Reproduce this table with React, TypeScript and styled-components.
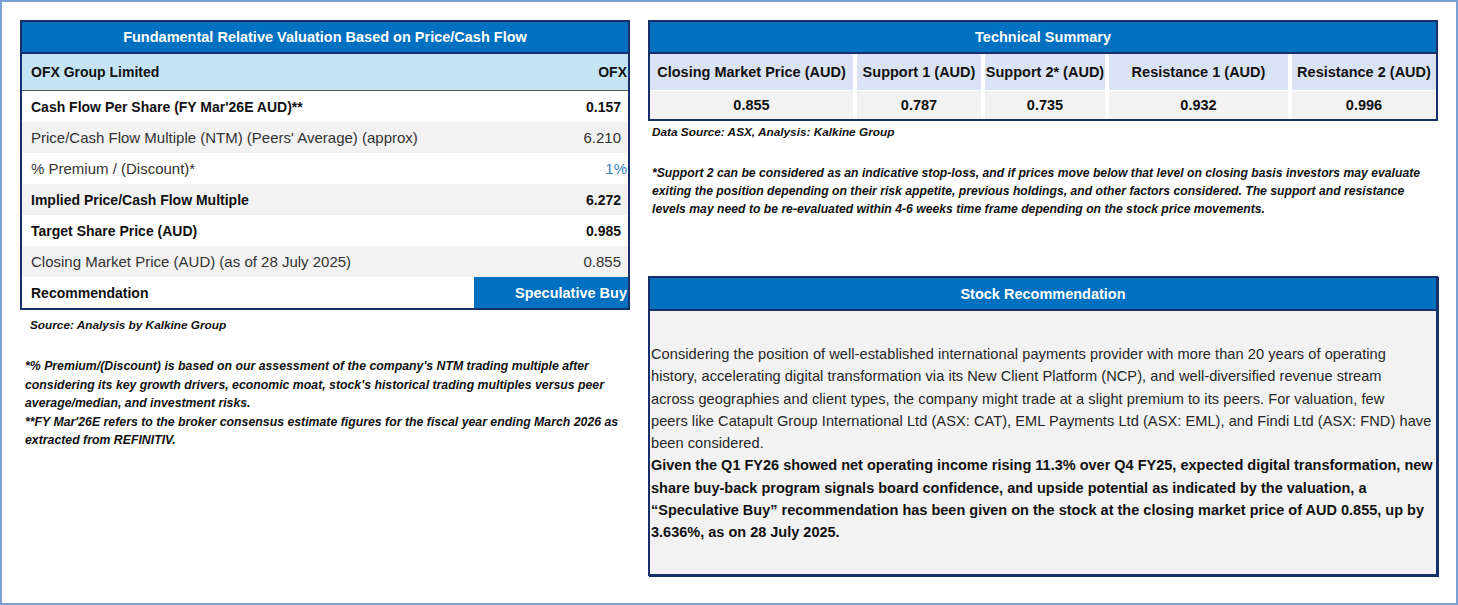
import React from "react";
import styled, { createGlobalStyle } from "styled-components";

const GlobalStyle = createGlobalStyle`
  html, body {
    margin: 0;
    padding: 0;
    background: #ffffff;
  }
  body {
    font-family: "Liberation Sans", Arial, sans-serif;
    color: #111;
  }
`;

const navy = "#17306b";
const blue = "#0070c0";

const Frame = styled.div`
  box-sizing: border-box;
  width: 1458px;
  height: 605px;
  border: 2px solid #7ba0d6;
  padding: 18px 18px 0 18px;
  display: grid;
  grid-template-columns: 610px 790px;
  column-gap: 18px;
  align-items: start;
`;

const Column = styled.div`
  display: flex;
  flex-direction: column;
`;

const Table = styled.div`
  box-sizing: border-box;
  border: 2px solid ${navy};
  display: flex;
  flex-direction: column;
`;

const TitleBar = styled.div<{ $h?: number }>`
  height: ${(p) => p.$h ?? 30}px;
  background: ${blue};
  border-bottom: 2px solid ${navy};
  color: #fff;
  font-weight: 700;
  font-size: 14.5px;
  display: flex;
  align-items: center;
  justify-content: center;
`;

const Row = styled.div<{ $bg?: string; $h?: number; $line?: boolean }>`
  height: ${(p) => p.$h ?? 31}px;
  background: ${(p) => p.$bg ?? "#fff"};
  border-bottom: ${(p) => (p.$line ? "1px solid #555" : "none")};
  display: flex;
  align-items: stretch;
  justify-content: space-between;
`;

const Label = styled.div<{ $bold?: boolean }>`
  display: flex;
  align-items: center;
  padding-left: 9px;
  font-size: ${(p) => (p.$bold ? 14 : 15)}px;
  font-weight: ${(p) => (p.$bold ? 700 : 400)};
  color: ${(p) => (p.$bold ? "#111" : "#333")};
`;

const Value = styled.div<{ $bold?: boolean; $color?: string; $pad?: number }>`
  display: flex;
  align-items: center;
  justify-content: flex-end;
  padding-right: ${(p) => p.$pad ?? 7}px;
  font-size: ${(p) => (p.$bold ? 14 : 15)}px;
  font-weight: ${(p) => (p.$bold ? 700 : 400)};
  color: ${(p) => p.$color ?? (p.$bold ? "#111" : "#333")};
`;

const RecoCell = styled.div`
  width: 153px;
  display: flex;
  align-items: center;
  justify-content: flex-end;
  padding-right: 1px;
  background: ${blue};
  color: #fff;
  font-weight: 700;
  font-size: 14.5px;
`;

const Source = styled.div<{ $indent?: number; $top?: number }>`
  margin-top: ${(p) => p.$top ?? 8}px;
  padding-left: ${(p) => p.$indent ?? 0}px;
  font-size: 11.8px;
  font-style: italic;
  font-weight: 700;
  line-height: 15px;
  color: #111;
`;

const Note = styled.p<{ $top: number; $indent: number; $size: number; $lh: number }>`
  margin: ${(p) => p.$top}px 0 0 0;
  padding-left: ${(p) => p.$indent}px;
  font-size: ${(p) => p.$size}px;
  font-style: italic;
  font-weight: 700;
  line-height: ${(p) => p.$lh}px;
  white-space: nowrap;
  color: #111;
`;

const TechGrid = styled.div`
  display: grid;
  grid-template-columns: 203px 128px 124px 183px 148px;
`;

const HeadCell = styled.div<{ $first?: boolean }>`
  height: 36px;
  background: #dae3f3;
  border-left: ${(p) => (p.$first ? "none" : "4px solid #fff")};
  border-bottom: 1px solid #fff;
  display: flex;
  align-items: center;
  justify-content: center;
  font-weight: 700;
  font-size: 14.5px;
  white-space: nowrap;
`;

const ValCell = styled.div<{ $first?: boolean }>`
  height: 28px;
  background: #f2f2f2;
  border-left: ${(p) => (p.$first ? "none" : "4px solid #fff")};
  display: flex;
  align-items: center;
  justify-content: center;
  font-weight: 700;
  font-size: 14.5px;
`;

const RecoBox = styled.div`
  box-sizing: border-box;
  margin-top: 58px;
  height: 300px;
  border: 2px solid ${navy};
  box-shadow: 1px 1px 0 ${navy};
  display: flex;
  flex-direction: column;
`;

const RecoBody = styled.div`
  flex: 1;
  background: #f2f2f2;
  padding: 32px 0 0 1px;
  font-size: 14.6px;
  letter-spacing: 0.05px;
  line-height: 22.3px;
  white-space: nowrap;
  color: #262626;
`;

const Strong = styled.span`
  font-size: 14.5px;
  letter-spacing: 0;
  font-weight: 700;
  color: #111;
`;

type LeftRow = {
  label: string;
  value: string;
  bold?: boolean;
  bg: string;
  color?: string;
  pad?: number;
};

const leftRows: LeftRow[] = [
  { label: "Cash Flow Per Share (FY Mar'26E AUD)**", value: "0.157", bold: true, bg: "#fff" },
  { label: "Price/Cash Flow Multiple (NTM) (Peers' Average) (approx)", value: "6.210", bg: "#f2f2f2" },
  { label: "% Premium / (Discount)*", value: "1%", bg: "#fff", color: "#3a86b8", pad: 1 },
  { label: "Implied Price/Cash Flow Multiple", value: "6.272", bold: true, bg: "#f2f2f2" },
  { label: "Target Share Price (AUD)", value: "0.985", bold: true, bg: "#fff" },
  { label: "Closing Market Price (AUD) (as of 28 July 2025)", value: "0.855", bg: "#f2f2f2" },
];

const techCols = [
  { head: "Closing Market Price (AUD)", value: "0.855" },
  { head: "Support 1 (AUD)", value: "0.787" },
  { head: "Support 2* (AUD)", value: "0.735" },
  { head: "Resistance 1 (AUD)", value: "0.932" },
  { head: "Resistance 2 (AUD)", value: "0.996" },
];

const App = () => {
  return (
    <>
      <GlobalStyle />
      <Frame>
        <Column>
          <Table>
            <TitleBar>Fundamental Relative Valuation Based on Price/Cash Flow</TitleBar>
            <Row $bg="#c4e4f5" $h={36} $line>
              <Label $bold>OFX Group Limited</Label>
              <Value $bold $pad={1}>OFX</Value>
            </Row>
            {leftRows.map((r) => (
              <Row key={r.label} $bg={r.bg}>
                <Label $bold={r.bold}>{r.label}</Label>
                <Value $bold={r.bold} $color={r.color} $pad={r.pad}>
                  {r.value}
                </Value>
              </Row>
            ))}
            <Row $bg="#fff">
              <Label $bold>Recommendation</Label>
              <RecoCell>Speculative Buy</RecoCell>
            </Row>
          </Table>
          <Source $indent={10}>Source: Analysis by Kalkine Group</Source>
          <Note $top={24} $indent={5} $size={12.3} $lh={18.5}>
            *% Premium/(Discount) is based on our assessment of the company's NTM trading multiple after
            <br />
            considering its key growth drivers, economic moat, stock's historical trading multiples versus peer
            <br />
            average/median, and investment risks.
            <br />
            **FY Mar'26E refers to the broker consensus estimate figures for the fiscal year ending March 2026 as
            <br />
            extracted from REFINITIV.
          </Note>
        </Column>

        <Column>
          <Table>
            <TitleBar>Technical Summary</TitleBar>
            <TechGrid>
              {techCols.map((c, i) => (
                <HeadCell key={c.head} $first={i === 0}>
                  {c.head}
                </HeadCell>
              ))}
              {techCols.map((c, i) => (
                <ValCell key={c.head + "v"} $first={i === 0}>
                  {c.value}
                </ValCell>
              ))}
            </TechGrid>
          </Table>
          <Source $indent={4} $top={4}>
            Data Source: ASX, Analysis: Kalkine Group
          </Source>
          <Note $top={24} $indent={4} $size={12.2} $lh={18}>
            *Support 2 can be considered as an indicative stop-loss, and if prices move below that level on closing
            basis investors may evaluate
            <br />
            exiting the position depending on their risk appetite, previous holdings, and other factors considered.
            The support and resistance
            <br />
            levels may need to be re-evaluated within 4-6 weeks time frame depending on the stock price movements.
          </Note>

          <RecoBox>
            <TitleBar $h={31}>Stock Recommendation</TitleBar>
            <RecoBody>
              Considering the position of well-established international payments provider with more than 20 years
              of operating
              <br />
              history, accelerating digital transformation via its New Client Platform (NCP), and well-diversified
              revenue stream
              <br />
              across geographies and client types, the company might trade at a slight premium to its peers. For
              valuation, few
              <br />
              peers like Catapult Group International Ltd (ASX: CAT), EML Payments Ltd (ASX: EML), and Findi Ltd
              (ASX: FND) have
              <br />
              been considered.
              <br />
              <Strong>
                Given the Q1 FY26 showed net operating income rising 11.3% over Q4 FY25, expected digital
                transformation, new
                <br />
                share buy-back program signals board confidence, and upside potential as indicated by the valuation, a
                <br />
                “Speculative Buy” recommendation has been given on the stock at the closing market price of AUD 0.855,
                up by
                <br />
                3.636%, as on 28 July 2025.
              </Strong>
            </RecoBody>
          </RecoBox>
        </Column>
      </Frame>
    </>
  );
};

export default App;
